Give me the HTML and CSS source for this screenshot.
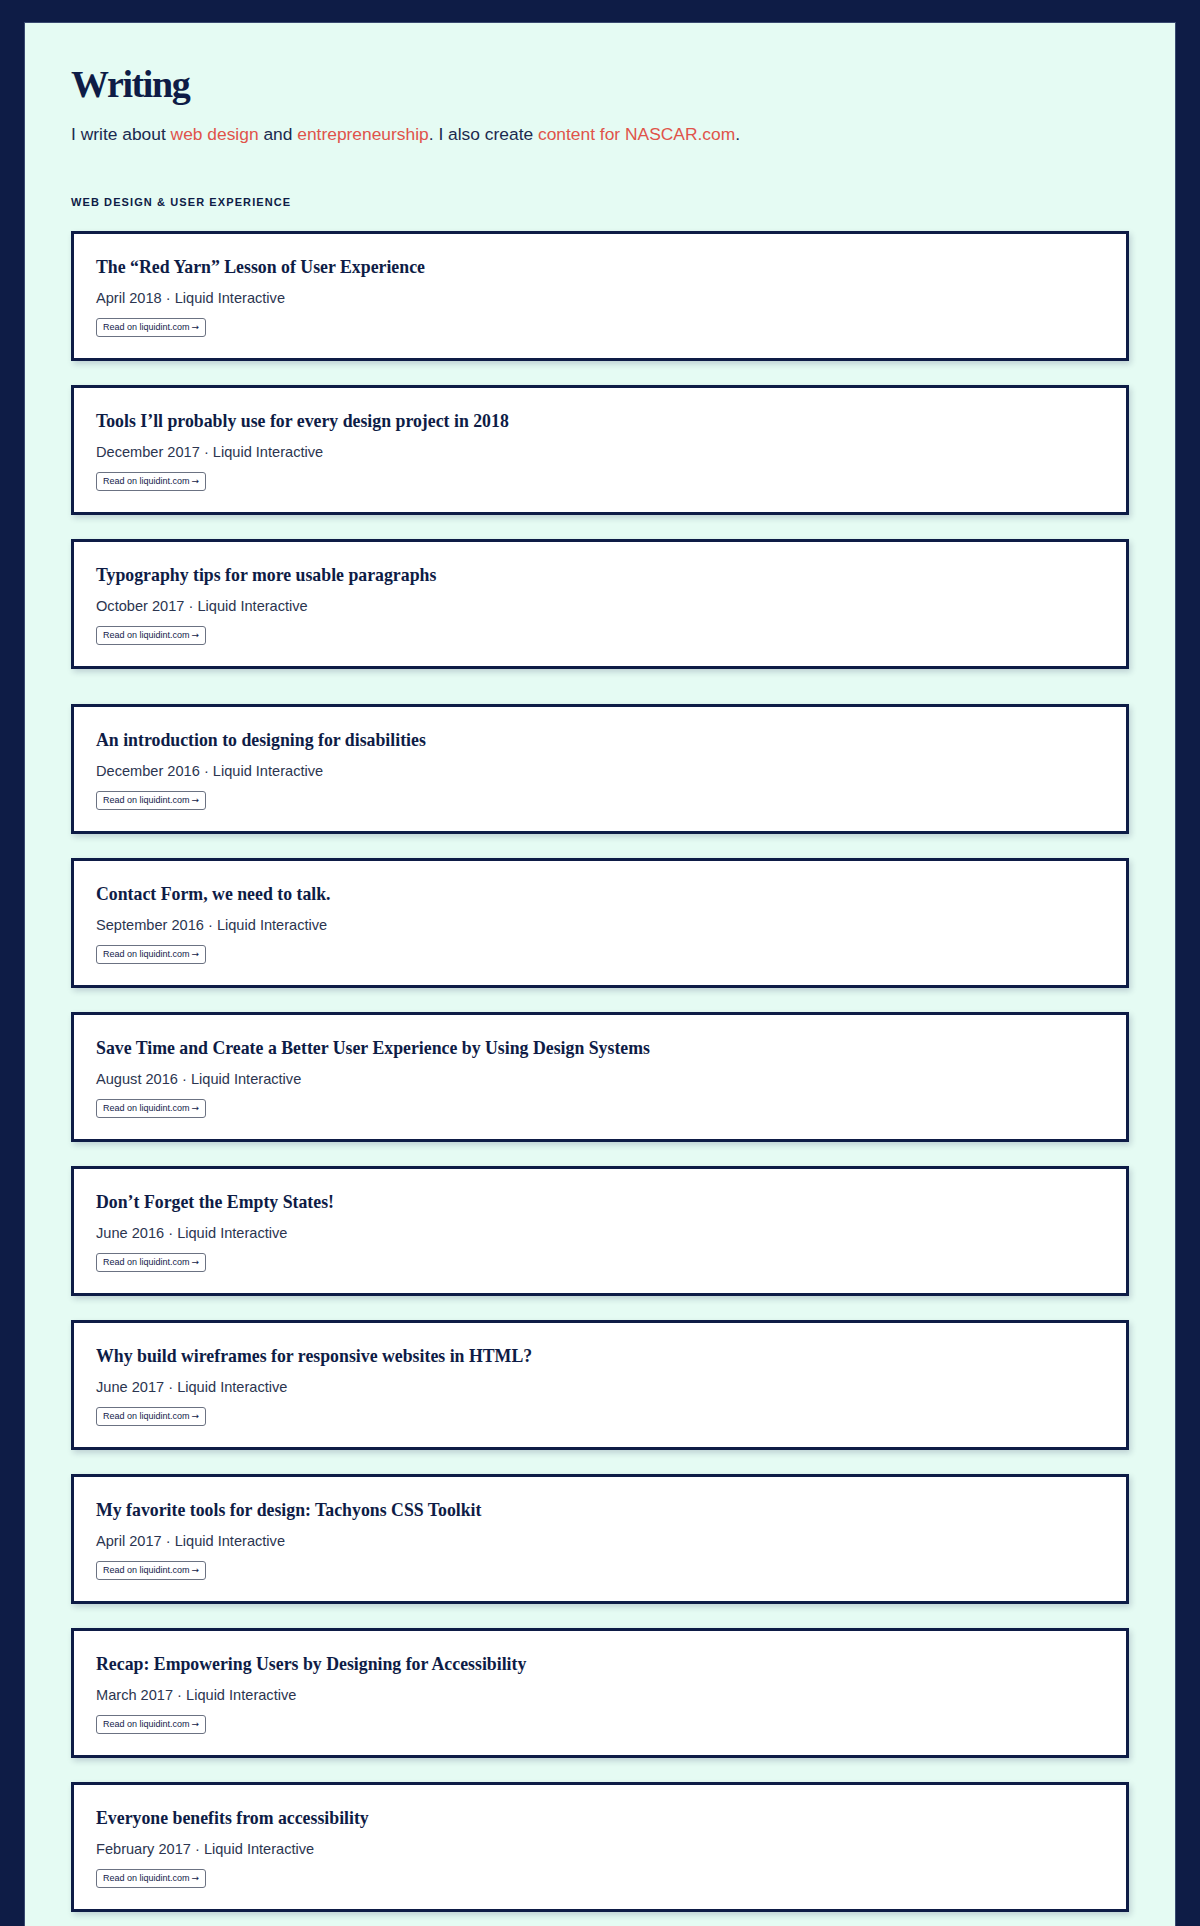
FILE: index.html
```html
<!DOCTYPE html>
<html lang="en">
<head>
<meta charset="utf-8">
<title>Writing</title>
<link rel="stylesheet" href="styles.css">
</head>
<body>
<main class="panel">
  <h1 class="title">Writing</h1>
  <p class="intro">I write about <a href="#">web design</a> and <a href="#">entrepreneurship</a>. I also create <a href="#">content for NASCAR.com</a>.</p>

  <h2 class="label">Web Design &amp; User Experience</h2>

  <ul class="cards group">
    <li class="card">
      <h3 class="card-title">The “Red Yarn” Lesson of User Experience</h3>
      <p class="card-meta">April 2018 · Liquid Interactive</p>
      <a class="btn" href="#">Read on liquidint.com <span class="arrow">→</span></a>
    </li>
    <li class="card">
      <h3 class="card-title">Tools I’ll probably use for every design project in 2018</h3>
      <p class="card-meta">December 2017 · Liquid Interactive</p>
      <a class="btn" href="#">Read on liquidint.com <span class="arrow">→</span></a>
    </li>
    <li class="card">
      <h3 class="card-title">Typography tips for more usable paragraphs</h3>
      <p class="card-meta">October 2017 · Liquid Interactive</p>
      <a class="btn" href="#">Read on liquidint.com <span class="arrow">→</span></a>
    </li>
  </ul>

  <ul class="cards">
    <li class="card">
      <h3 class="card-title">An introduction to designing for disabilities</h3>
      <p class="card-meta">December 2016 · Liquid Interactive</p>
      <a class="btn" href="#">Read on liquidint.com <span class="arrow">→</span></a>
    </li>
    <li class="card">
      <h3 class="card-title">Contact Form, we need to talk.</h3>
      <p class="card-meta">September 2016 · Liquid Interactive</p>
      <a class="btn" href="#">Read on liquidint.com <span class="arrow">→</span></a>
    </li>
    <li class="card">
      <h3 class="card-title">Save Time and Create a Better User Experience by Using Design Systems</h3>
      <p class="card-meta">August 2016 · Liquid Interactive</p>
      <a class="btn" href="#">Read on liquidint.com <span class="arrow">→</span></a>
    </li>
    <li class="card">
      <h3 class="card-title">Don’t Forget the Empty States!</h3>
      <p class="card-meta">June 2016 · Liquid Interactive</p>
      <a class="btn" href="#">Read on liquidint.com <span class="arrow">→</span></a>
    </li>
    <li class="card">
      <h3 class="card-title">Why build wireframes for responsive websites in HTML?</h3>
      <p class="card-meta">June 2017 · Liquid Interactive</p>
      <a class="btn" href="#">Read on liquidint.com <span class="arrow">→</span></a>
    </li>
    <li class="card">
      <h3 class="card-title">My favorite tools for design: Tachyons CSS Toolkit</h3>
      <p class="card-meta">April 2017 · Liquid Interactive</p>
      <a class="btn" href="#">Read on liquidint.com <span class="arrow">→</span></a>
    </li>
    <li class="card">
      <h3 class="card-title">Recap: Empowering Users by Designing for Accessibility</h3>
      <p class="card-meta">March 2017 · Liquid Interactive</p>
      <a class="btn" href="#">Read on liquidint.com <span class="arrow">→</span></a>
    </li>
    <li class="card">
      <h3 class="card-title">Everyone benefits from accessibility</h3>
      <p class="card-meta">February 2017 · Liquid Interactive</p>
      <a class="btn" href="#">Read on liquidint.com <span class="arrow">→</span></a>
    </li>
  </ul>
</main>
</body>
</html>
```
FILE: styles.css
```css
* { box-sizing: border-box; }

html, body {
  margin: 0;
  background: #0e1c46;
}

body {
  padding: 22px 24px 0;
  font-family: "Liberation Sans", Arial, sans-serif;
  color: #13224a;
}

.panel {
  background: #e5fbf3;
  padding: 39px 46px 48px;
  border-left: 1px solid #3a4a70;
  border-right: 1px solid #3a4a70;
  border-top: 1px solid #3a4a70;
}

.title {
  margin: 0;
  font-family: "Liberation Serif", "Times New Roman", serif;
  font-weight: 700;
  font-size: 38px;
  line-height: 1.2;
  letter-spacing: -1.4px;
  color: #0e1c46;
}

.intro {
  margin: 13px 0 0;
  font-size: 17.4px;
  line-height: 27px;
  color: #1b2a4e;
}

.intro a {
  color: #e0534a;
  text-decoration: none;
}

.label {
  margin: 46px 0 0;
  font-size: 11px;
  line-height: 16px;
  font-weight: 700;
  letter-spacing: 1.1px;
  text-transform: uppercase;
  color: #0e1c46;
}

.cards {
  list-style: none;
  margin: 21px 0 0;
  padding: 0;
  display: flex;
  flex-direction: column;
  gap: 24px;
}

.cards.group + .cards {
  margin-top: 35px;
}

.card {
  background: #fff;
  border: 3px solid #0e1c46;
  padding: 21px 22px 21px;
  box-shadow: 2px 3px 6px rgba(14, 28, 70, 0.18);
  display: flex;
  flex-direction: column;
  align-items: flex-start;
}

.card-title {
  margin: 0;
  font-family: "Liberation Serif", "Times New Roman", serif;
  font-weight: 700;
  font-size: 17.8px;
  line-height: 24px;
  color: #0e1c46;
}

.card-meta {
  margin: 9px 0 0;
  font-size: 14.6px;
  line-height: 20px;
  color: #2b3550;
}

.btn {
  margin-top: 10px;
  height: 19px;
  display: inline-flex;
  align-items: center;
  gap: 2px;
  padding: 0 6px;
  border: 1px solid #6b7282;
  border-radius: 3px;
  font-size: 9px;
  color: #13224a;
  text-decoration: none;
  white-space: nowrap;
}

.arrow {
  font-family: "DejaVu Sans", sans-serif;
  font-size: 9px;
}
```
